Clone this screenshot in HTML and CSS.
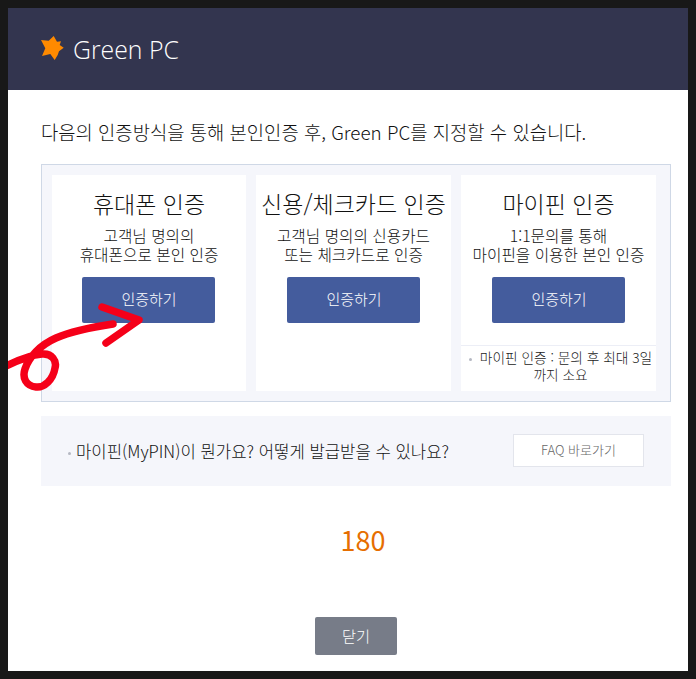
FILE: index.html
```html
<!DOCTYPE html>
<html lang="ko">
<head>
    <meta charset="UTF-8">
    <meta name="viewport" content="width=device-width, initial-scale=1.0">
    <title>Green PC</title>
    <link rel="stylesheet" href="styles.css">
</head>
<body>

    <div class="popup">
        <header class="popup-head">
            <svg class="logo" width="23" height="24" viewBox="0 0 23 24">
                <path d="M12.7 0 L16 5.7 L20 5.3 L18.7 9 L22.7 11.7 L18 15.3 L16.7 19 L13.7 24 L9.3 18 L1 20 L4.3 12.3 L0 4 L7.7 4.7 Z" fill="#ff8a00"/>
            </svg>
            <span class="brand">Green PC</span>
        </header>

        <div class="popup-body">
            <p class="intro">다음의 인증방식을 통해 본인인증 후, Green PC를 지정할 수 있습니다.</p>

            <div class="methods">
                <div class="method">
                    <h2>휴대폰 인증</h2>
                    <p>고객님 명의의<br>휴대폰으로 본인 인증</p>
                    <button class="auth-btn">인증하기</button>
                </div>
                <div class="method">
                    <h2>신용/체크카드 인증</h2>
                    <p>고객님 명의의 신용카드<br>또는 체크카드로 인증</p>
                    <button class="auth-btn">인증하기</button>
                </div>
                <div class="method">
                    <h2>마이핀 인증</h2>
                    <p>1:1문의를 통해<br>마이핀을 이용한 본인 인증</p>
                    <button class="auth-btn">인증하기</button>
                    <div class="method-note"><span class="dot"></span>마이핀 인증 : 문의 후 최대 3일<br>까지 소요</div>
                </div>
            </div>

            <div class="faq">
                <span class="faq-text"><span class="dot"></span>마이핀(MyPIN)이 뭔가요? 어떻게 발급받을 수 있나요?</span>
                <button class="faq-btn">FAQ 바로가기</button>
            </div>

            <div class="timer">180</div>

            <div class="actions">
                <button class="close-btn">닫기</button>
            </div>
        </div>
    </div>

    <svg class="scribble" width="140" height="100" viewBox="0 0 140 100">
        <g fill="none" stroke="#f50019" stroke-width="7.5" stroke-linecap="round" stroke-linejoin="round">
            <path d="M-6 73 C10 65 22 60 34 59 C44 58 49 66 47 73 C45 85 36 93 28 92 C18 91 14 83 17 74 C21 62 32 50 48 43 C64 36 85 32 105 29"/>
            <path d="M94 12 L131 25 L98 48"/>
        </g>
    </svg>

</body>
</html>
```

FILE: styles.css
```css
* {
    box-sizing: border-box;
}

html, body {
    height: 100%;
}

body {
    margin: 0;
    padding: 8px;
    background: #181818;
    color: #111;
    font-family: "Noto Sans CJK KR", "Noto Sans", sans-serif;
    overflow: hidden;
}

button {
    font-family: inherit;
    border: none;
    cursor: pointer;
}

.popup {
    height: 663px;
    background: white;
    display: flex;
    flex-direction: column;
}

.popup-head {
    height: 82px;
    background: #33354f;
    padding-left: 33px;
    display: flex;
    align-items: center;
    gap: 9px;
}

.logo {
    margin-top: -2px;
}

.brand {
    color: white;
    font-family: "Open Sans", sans-serif;
    font-weight: 300;
    font-size: 24.8px;
}

.popup-body {
    flex: 1;
    padding: 0 17px 0 33px;
}

.intro {
    margin: 30px 0 20px;
    font-size: 18.8px;
    line-height: 24px;
    font-weight: 300;
    white-space: nowrap;
}

.methods {
    height: 238px;
    border: 1px solid #cfd8e6;
    background: #f5f6fb;
    padding: 10px 14px 10px 10px;
    display: grid;
    grid-template-columns: 194px 195px 195px;
    gap: 10px;
}

.method {
    background: white;
    text-align: center;
    display: flex;
    flex-direction: column;
    align-items: center;
}

.method:first-child .auth-btn {
    margin-right: 1px;
}

.method h2 {
    margin: 13px 0 0;
    font-size: 23px;
    font-weight: 300;
    line-height: 30px;
    white-space: nowrap;
}

.method p {
    margin: 8px 0 0;
    font-size: 15.7px;
    font-weight: 300;
    line-height: 19px;
    white-space: nowrap;
}

.auth-btn {
    margin-top: 13px;
    width: 133px;
    height: 46px;
    flex: none;
    background: #445c9d;
    color: white;
    font-size: 15px;
    font-weight: 300;
    padding: 0 0 3px 1px;
    border-radius: 2px;
}

.method-note {
    margin-top: 22px;
    width: 100%;
    border-top: 1px solid #eceef6;
    padding: 3px 0 0 4px;
    font-size: 13.7px;
    font-weight: 300;
    line-height: 17px;
    color: #222;
    white-space: nowrap;
}

.dot {
    display: inline-block;
    width: 3px;
    height: 3px;
    background: #b5b8c2;
    border-radius: 50%;
    vertical-align: middle;
    margin-right: 8px;
}

.faq {
    margin-top: 14px;
    height: 70px;
    background: #f5f6fb;
    display: flex;
    align-items: center;
    justify-content: space-between;
    padding: 0 27px;
}

.faq-text {
    font-size: 16.7px;
    font-weight: 300;
    white-space: nowrap;
}

.faq-text .dot {
    margin-right: 5px;
}

.faq-btn {
    margin-top: -1px;
    width: 131px;
    height: 33px;
    background: white;
    border: 1px solid #e3e5ec;
    color: #666;
    font-size: 13px;
    font-weight: 300;
    padding: 0 0 2px;
}

.timer {
    margin-top: 36px;
    padding-left: 14px;
    text-align: center;
    color: #e66e00;
    font-size: 27px;
    font-weight: 400;
    line-height: 36px;
}

.actions {
    margin-top: 59px;
    text-align: center;
}

.close-btn {
    width: 82px;
    height: 38px;
    background: #777c88;
    color: white;
    font-size: 15.3px;
    font-weight: 300;
    padding: 0 0 2px;
    border-radius: 2px;
}

/* hand drawn marker on top of the page */
.scribble {
    position: absolute;
    left: 8px;
    top: 295px;
}
```
